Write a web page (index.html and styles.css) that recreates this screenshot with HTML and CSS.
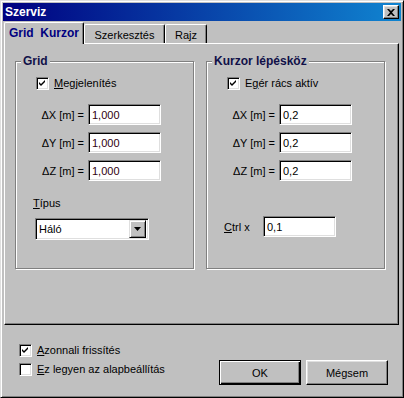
FILE: index.html
```html
<!DOCTYPE html>
<html lang="hu">
<head>
  <meta charset="UTF-8" />
  <title>Szerviz</title>
  <link rel="stylesheet" href="styles.css">
</head>
<body>
  <div class="window">
    <div class="titlebar">
      <span class="title">Szerviz</span>
      <button class="close-btn">
        <svg width="8" height="7" viewBox="0 0 8 7"><path d="M0 0h2l2 2 2-2h2L5 3.5 8 7H6L4 5 2 7H0l3-3.5z" fill="#000"/></svg>
      </button>
    </div>

    <div class="tabs">
      <div class="tab active">Grid&nbsp; Kurzor</div>
      <div class="tab tab-edit">Szerkesztés</div>
      <div class="tab tab-draw">Rajz</div>
    </div>

    <div class="panel">
      <div class="group">
        <span class="legend">Grid</span>
        <label class="check">
          <span class="box"><svg width="9" height="9" viewBox="0 0 9 9"><path d="M1 3l2 2 4-4v2L3 7 1 5z" fill="#000"/></svg></span>
          <span><u>M</u>egjelenítés</span>
        </label>
        <div class="rows">
          <div class="row"><span class="row-label">&Delta;X [m] =</span><input class="field field-grid" type="text" value="1,000"></div>
          <div class="row"><span class="row-label">&Delta;Y [m] =</span><input class="field field-grid" type="text" value="1,000"></div>
          <div class="row"><span class="row-label">&Delta;Z [m] =</span><input class="field field-grid" type="text" value="1,000"></div>
        </div>
        <div class="type-label"><u>T</u>ípus</div>
        <div class="combo">
          <span class="combo-text">Háló</span>
          <span class="combo-btn"><svg width="7" height="4" viewBox="0 0 7 4"><path d="M0 0h7L3.5 4z" fill="#000"/></svg></span>
        </div>
      </div>

      <div class="group">
        <span class="legend">Kurzor lépésköz</span>
        <label class="check">
          <span class="box"><svg width="9" height="9" viewBox="0 0 9 9"><path d="M1 3l2 2 4-4v2L3 7 1 5z" fill="#000"/></svg></span>
          <span>E<u>g</u>ér rács aktív</span>
        </label>
        <div class="rows">
          <div class="row"><span class="row-label">&Delta;X [m] =</span><input class="field" type="text" value="0,2"></div>
          <div class="row"><span class="row-label">&Delta;Y [m] =</span><input class="field" type="text" value="0,2"></div>
          <div class="row"><span class="row-label">&Delta;Z [m] =</span><input class="field" type="text" value="0,2"></div>
        </div>
        <div class="ctrl-row">
          <span class="ctrl-label"><u>C</u>trl x</span>
          <input class="field" type="text" value="0,1">
        </div>
      </div>
    </div>

    <div class="footer">
      <div class="options">
        <label class="check">
          <span class="box"><svg width="9" height="9" viewBox="0 0 9 9"><path d="M1 3l2 2 4-4v2L3 7 1 5z" fill="#000"/></svg></span>
          <span><u>A</u>zonnali frissítés</span>
        </label>
        <label class="check">
          <span class="box"></span>
          <span><u>E</u>z legyen az alapbeállítás</span>
        </label>
      </div>
      <div class="buttons">
        <button class="btn btn-default">OK</button>
        <button class="btn">Mégsem</button>
      </div>
    </div>
  </div>
</body>
</html>
```

FILE: styles.css
```css
/* Reset */
* {
  margin: 0;
  padding: 0;
  box-sizing: border-box;
}

body {
  font-family: "Liberation Sans", Arial, sans-serif;
  font-size: 11px;
  color: #000;
  background: #c0c0c0;
}

u {
  text-decoration: underline;
  text-underline-offset: 1px;
}

/* Window frame */
.window {
  width: 404px;
  height: 398px;
  background: #c0c0c0;
  border: 1px solid;
  border-color: #dfdfdf #000 #000 #dfdfdf;
  box-shadow: inset 1px 1px #fff, inset -1px -1px #808080;
  padding: 2px;
  display: flex;
  flex-direction: column;
}

.titlebar {
  height: 18px;
  flex-shrink: 0;
  background: linear-gradient(to right, #000080, #1084d0);
  display: flex;
  align-items: center;
  justify-content: space-between;
  padding: 0 2px;
}

.title {
  color: #fff;
  font-weight: bold;
  font-size: 12px;
}

.close-btn {
  width: 16px;
  height: 14px;
  background: #c0c0c0;
  border: 1px solid;
  border-color: #fff #000 #000 #fff;
  box-shadow: inset -1px -1px #808080, inset 1px 1px #dfdfdf;
  display: flex;
  align-items: center;
  justify-content: center;
}

/* Tabs */
.tabs {
  height: 22px;
  flex-shrink: 0;
  display: flex;
  align-items: flex-end;
  padding-left: 1px;
  position: relative;
  z-index: 1;
}

.tab {
  height: 19px;
  padding-top: 3px;
  line-height: 14px;
  text-align: center;
  background: #c0c0c0;
  border-left: 1px solid #fff;
  border-top: 1px solid #fff;
  border-right: 1px solid #000;
  border-top-left-radius: 2px;
  border-top-right-radius: 2px;
  box-shadow: inset -1px 0 #808080;
}

.tab.active {
  width: 80px;
  height: 22px;
  margin-bottom: -1px;
  font-weight: bold;
  font-size: 12px;
  color: #000080;
}

.tab-edit {
  width: 81px;
}

.tab-draw {
  width: 42px;
}

/* Tab page */
.panel {
  width: 395px;
  height: 282px;
  flex-shrink: 0;
  margin-left: 1px;
  border: 1px solid;
  border-color: #fff #000 #000 #fff;
  box-shadow: inset -1px -1px #808080;
  padding: 17px 10px 0 10px;
  display: flex;
  gap: 12px;
}

.group {
  position: relative;
  width: 179px;
  height: 208px;
  border: 1px solid #808080;
  box-shadow: inset 1px 1px #fff, 1px 1px #fff;
  display: flex;
  flex-direction: column;
  padding-top: 14px;
}

.legend {
  position: absolute;
  top: -8px;
  left: 5px;
  padding: 0 2px;
  background: #c0c0c0;
  font-weight: bold;
  font-size: 12px;
  line-height: 14px;
  color: #101048;
}

.check {
  display: flex;
  align-items: center;
  gap: 5px;
  height: 15px;
  line-height: 15px;
}

.group .check {
  margin-left: 20px;
}

.box {
  width: 13px;
  height: 13px;
  background: #fff;
  border: 1px solid;
  border-color: #808080 #fff #fff #808080;
  box-shadow: inset 1px 1px #000, inset -1px -1px #dfdfdf;
  display: flex;
  align-items: center;
  justify-content: center;
}

.rows {
  margin-top: 13px;
  display: flex;
  flex-direction: column;
  gap: 7px;
}

.row {
  display: flex;
  align-items: center;
  gap: 4px;
}

.row-label {
  width: 68px;
  text-align: right;
}

.field {
  width: 73px;
  height: 21px;
  font-family: inherit;
  font-size: 11px;
  color: #000;
  background: #fff;
  border: 1px solid;
  border-color: #808080 #fff #fff #808080;
  box-shadow: inset 1px 1px #000, inset -1px -1px #dfdfdf;
  padding: 0 3px;
  outline: none;
}

.field-grid {
  color: #300010;
}

.type-label {
  margin: 16px 0 0 17px;
  line-height: 13px;
}

.combo {
  margin: 8px 0 0 19px;
  width: 114px;
  height: 22px;
  background: #fff;
  border: 1px solid;
  border-color: #808080 #fff #fff #808080;
  box-shadow: inset 1px 1px #000, inset -1px -1px #dfdfdf;
  padding: 2px;
  display: flex;
  align-items: center;
  justify-content: space-between;
}

.combo-text {
  padding-left: 1px;
}

.combo-btn {
  width: 17px;
  height: 18px;
  background: #c0c0c0;
  border: 1px solid;
  border-color: #dfdfdf #000 #000 #dfdfdf;
  box-shadow: inset 1px 1px #fff, inset -1px -1px #808080;
  display: flex;
  align-items: center;
  justify-content: center;
}

.ctrl-row {
  margin-top: 35px;
  display: flex;
  align-items: center;
  padding-left: 17px;
}

.ctrl-label {
  width: 39px;
}

/* Bottom area */
.footer {
  flex: 1;
  display: flex;
  justify-content: space-between;
  padding: 0 13px 0 16px;
}

.options {
  padding-top: 18px;
  display: flex;
  flex-direction: column;
  gap: 4px;
}

.buttons {
  margin-top: 35px;
  display: flex;
  gap: 5px;
}

.btn {
  width: 82px;
  height: 25px;
  font-family: inherit;
  font-size: 11px;
  color: #000;
  background: #c0c0c0;
  border: 1px solid;
  border-color: #fff #000 #000 #fff;
  box-shadow: inset -1px -1px #808080, inset 1px 1px #dfdfdf;
}

.btn-default {
  border: 1px solid #000;
  box-shadow: inset 1px 1px #fff, inset -1px -1px #000, inset -2px -2px #808080;
}
```
